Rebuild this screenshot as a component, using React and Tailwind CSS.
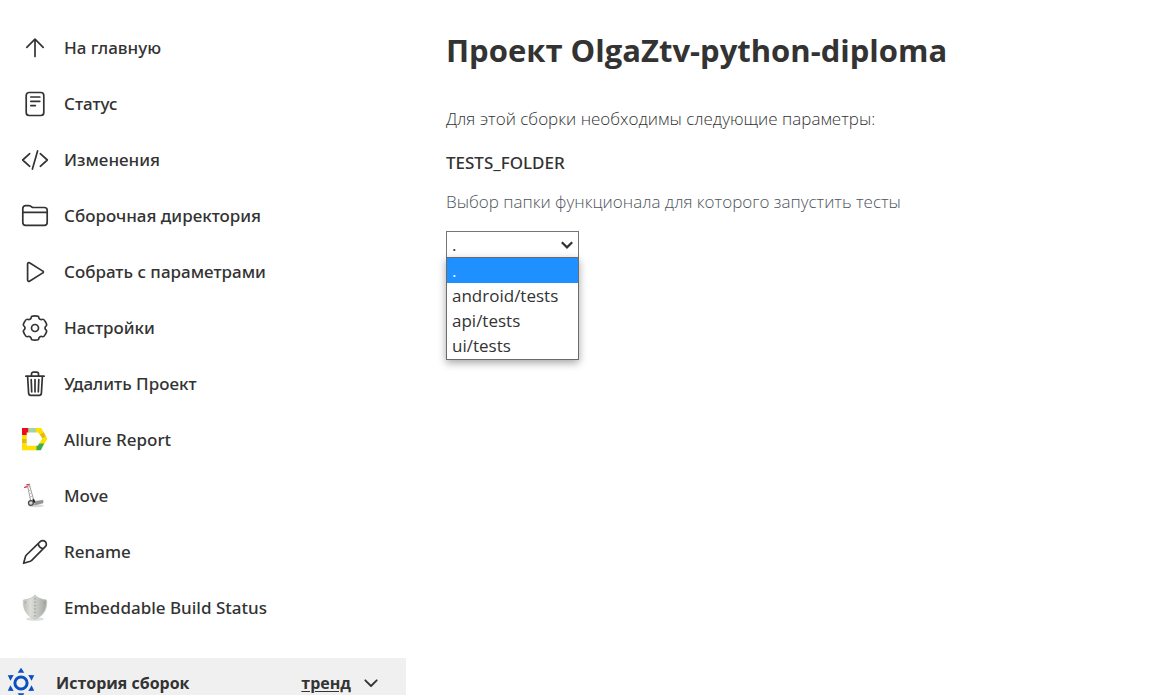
import React, { useState } from "react";

function Icon({ children }) {
  return (
    <svg
      viewBox="0 0 28 28"
      className="size-7 shrink-0"
      fill="none"
      stroke="currentColor"
      strokeWidth="1.7"
      strokeLinecap="round"
      strokeLinejoin="round"
      aria-hidden="true"
    >
      {children}
    </svg>
  );
}

const ArrowUp = () => (
  <Icon>
    <path d="M14 22.5V5.5M5.8 13.3 14 5.2l8.2 8.1" />
  </Icon>
);

const Reader = () => (
  <Icon>
    <rect x="5.2" y="2.5" width="17.6" height="23" rx="3" />
    <path d="M9.8 7h9M9.8 11.3h9M9.8 15.6h4.6" />
  </Icon>
);

const Code = () => (
  <Icon>
    <path d="M8.7 7.7 1.7 14l7 6.3M19.3 7.7l7 6.3-7 6.3M16.6 4.9l-5.2 18.2" />
  </Icon>
);

const Folder = () => (
  <Icon>
    <path d="M1.8 20.6V6.4a2.8 2.8 0 0 1 2.8-2.8h3.3c.6 0 1.1.2 1.6.5l1.3.9c.5.3 1 .5 1.6.5h11a2.8 2.8 0 0 1 2.8 2.8v12.3a2.8 2.8 0 0 1-2.8 2.8H4.6a2.8 2.8 0 0 1-2.8-2.8ZM1.8 10.3h24.4" />
  </Icon>
);

const Play = () => (
  <Icon>
    <path d="M6.600 5.900v16.200c0 1 1 1.600 1.900 1.100l13.300-8.300c.8-.4.8-1.400 0-1.800L8.500 4.800C7.600 4.300 6.600 4.900 6.600 5.900Z" />
  </Icon>
);

// Six rounded lobes: each corner is a curve control point, joined at edge midpoints.
function gearPath() {
  const points = [];
  for (let lobe = 0; lobe < 6; lobe++) {
    for (const [offset, radius] of [[-22, 10.1], [-17, 12.7], [17, 12.7], [22, 10.1]]) {
      const angle = ((lobe * 60 + offset) * Math.PI) / 180;
      points.push([14 + radius * Math.sin(angle), 14 - radius * Math.cos(angle)]);
    }
  }
  const mid = (a, b) => [(a[0] + b[0]) / 2, (a[1] + b[1]) / 2];
  const start = mid(points[points.length - 1], points[0]);
  return (
    `M${start}` +
    points.map((p, i) => `Q${p} ${mid(p, points[(i + 1) % points.length])}`).join("") +
    "Z"
  );
}

const Gear = () => (
  <Icon>
    <path d={gearPath()} />
    <circle cx="14" cy="14" r="3.5" />
  </Icon>
);

const Trash = () => (
  <Icon>
    <path d="M4.900 6.200h18.200M6.600 6.200l1 16.900c.1 1.300 1 2.200 2.200 2.200h8.400c1.300 0 2.100-.9 2.200-2.200l1-16.900M10.500 6V4a1.900 1.900 0 0 1 1.900-1.900h3.200A1.900 1.900 0 0 1 17.500 4v2M14 9.600v12.200M10.200 9.600l.5 12.200M17.800 9.600l-.5 12.200" />
  </Icon>
);

const Pencil = () => (
  <Icon>
    <path d="M2.600 25.300 4.500 18.500c.2-.6.5-1.100.9-1.500L19.200 3.600a3.600 3.600 0 0 1 5.100 0 3.600 3.600 0 0 1 0 5.100L10.700 22.400c-.4.400-.9.700-1.400.9ZM17.200 5.600c.4 2.700 2.100 4.500 4.900 5.200" />
  </Icon>
);

const Allure = () => (
  <Icon>
    <g stroke="none">
      <path fill="#a5d3a2" d="M7 2h8.500v4.500H7z" />
      <path fill="#ffe000" d="M15 2h5.200l3.200 5.200-3.800 2.600-2.600-3.300h-2z" />
      <path fill="#e2bd10" d="m22.800 6.200 2.400 4.200-3.800 2.400-2.500-4.200z" />
      <path fill="#ffe000" d="m25 10.200 1.400 2.600-3.600 6-4.400-1.700 2.700-4z" />
      <path fill="#3fac49" d="M18 17.500h5.200l-3.300 6.800H15v-4.600h2z" />
      <path fill="#ffe000" d="M1 19h4.700v.7H15.500v4.600H1z" />
      <path fill="#ffe000" d="M1 8.500h4.700V13H1z" />
      <path fill="#e0bb0c" d="M1 13h4.700v4.500H1z" />
      <path fill="#ffe000" d="M1 17.400h4.700v2.400H1z" />
      <path fill="#eb0a1e" d="M1 2h6.200v4.500H5.700v2.600H1z" />
    </g>
  </Icon>
);

const HandTruck = () => (
  <Icon>
    <ellipse cx="15" cy="23.800" rx="8" ry="1.500" fill="#d9d9d9" stroke="none" />
    <path d="M6.700 4.300 9.900 20M8.800 4.300l4.300 15" stroke="#9a9a9a" strokeWidth="1" />
    <path d="M7.700 8.500h1.700M8.300 11.500h2M9 14.500h2" stroke="#c5c5c5" strokeWidth="1" />
    <path d="M3.600 5.300 6.200 4.600M5.800 2.900l2.500-.5" stroke="#e02d35" strokeWidth="1.300" />
    <path d="M6.700 4.300 8.600 2.600l.2 2" stroke="#999" strokeWidth=".8" />
    <path d="m13.300 19.500 8.700-1.300v2.700l-8.300 2.100z" fill="#92958f" stroke="#8a8d88" strokeWidth=".6" />
    <path d="M11.600 16.800c1.700.2 2.600 1.600 2.600 3.700l-2.500.5z" fill="#222" stroke="none" />
    <circle cx="9.900" cy="21" r="2.400" fill="#d7d7d7" stroke="#4a4a4a" strokeWidth="1.300" />
  </Icon>
);

const Shield = () => (
  <Icon>
    <defs>
      <linearGradient id="shield-metal" x1="0" y1="0" x2="1" y2="0">
        <stop offset="0" stopColor="#b9bbb6" />
        <stop offset=".3" stopColor="#dcded9" />
        <stop offset=".55" stopColor="#c9cbc6" />
        <stop offset="1" stopColor="#a3a5a0" />
      </linearGradient>
    </defs>
    <ellipse cx="14" cy="25" rx="9" ry="1.700" fill="#dedede" stroke="none" />
    <path
      d="M14 1.300C11.500 3.700 8 5.500 2.400 6c-.7 8.500 2.500 15.800 11.600 19.200C23.100 21.800 26.300 14.500 25.600 6 20 5.500 16.500 3.700 14 1.300Z"
      fill="url(#shield-metal)"
      stroke="#c4c6c1"
      strokeWidth=".8"
    />
    <path d="M14 4.500v18" stroke="#92948f" strokeWidth="1.200" strokeDasharray=".4 3" />
    <path d="M4.500 8.600h.1M23.500 8.600h.1" stroke="#888" strokeWidth="1" />
  </Icon>
);

const HistoryMark = () => (
  <svg viewBox="-16 -16 32 32" className="size-8 shrink-0" fill="#0b50c0" aria-hidden="true">
    <circle r="6.100" fill="none" stroke="#0b50c0" strokeWidth="3" />
    {[0, 60, 120, 180, 240, 300].map((angle) => (
      <path key={angle} d="M0-15.300 3.300-10.300h-6.600z" transform={`rotate(${angle})`} />
    ))}
  </svg>
);

const tasks = [
  { label: "На главную", icon: <ArrowUp /> },
  { label: "Статус", icon: <Reader /> },
  { label: "Изменения", icon: <Code /> },
  { label: "Сборочная директория", icon: <Folder /> },
  { label: "Собрать с параметрами", icon: <Play /> },
  { label: "Настройки", icon: <Gear /> },
  { label: "Удалить Проект", icon: <Trash /> },
  { label: "Allure Report", icon: <Allure /> },
  { label: "Move", icon: <HandTruck /> },
  { label: "Rename", icon: <Pencil /> },
  { label: "Embeddable Build Status", icon: <Shield /> },
];

const folders = [".", "android/tests", "api/tests", "ui/tests"];

function Sidebar() {
  return (
    <aside className="w-[406px] shrink-0 pt-5">
      <nav aria-label="Задачи">
        <ul>
          {tasks.map((task) => (
            <li key={task.label}>
              <a href="#" className="flex h-14 items-center gap-[15px] pl-[21px] font-['Noto_Sans','Open_Sans',sans-serif] text-[17px] font-medium">
                {task.icon}
                <span>{task.label}</span>
              </a>
            </li>
          ))}
        </ul>
      </nav>
      <section className="mt-[22px] flex h-[50px] items-center bg-[#f0f0f0] pr-[27px] pl-[5px]">
        <HistoryMark />
        <h2 className="ml-[19px] flex-1 text-[16px] font-bold">История сборок</h2>
        <a href="#" className="text-[16px] font-bold underline underline-offset-2">
          тренд
        </a>
        <button type="button" aria-label="Свернуть" className="ml-3">
          <svg viewBox="0 0 16 16" className="size-4" fill="none" stroke="currentColor" strokeWidth="1.800" strokeLinecap="round" strokeLinejoin="round">
            <path d="m2.300 5.300 5.700 5.700 5.700-5.700" />
          </svg>
        </button>
      </section>
    </aside>
  );
}

function FolderSelect() {
  const [value, setValue] = useState(".");
  return (
    <div className="relative mt-4 w-[133px]">
      <select
        id="tests-folder"
        value={value}
        onChange={(e) => setValue(e.target.value)}
        className="block h-7 w-full appearance-none border border-[#767676] bg-white pl-[5px] text-[17px] leading-[26px]"
      >
        {folders.map((folder) => (
          <option key={folder}>{folder}</option>
        ))}
      </select>
      <svg viewBox="0 0 14 14" className="pointer-events-none absolute top-[7px] right-[5px] size-[14px]" fill="none" stroke="currentColor" strokeWidth="2.200" aria-hidden="true">
        <path d="m1.800 4.200 5.200 5.200 5.200-5.200" />
      </svg>
      <ul
        role="listbox"
        aria-label="TESTS_FOLDER"
        className="absolute top-[26px] left-0 w-full border border-[#6b6b6b] bg-white pb-px text-[17px] leading-[25px] shadow-[0_3px_8px_rgba(0,0,0,0.35)]"
      >
        {folders.map((folder) => (
          <li
            key={folder}
            role="option"
            aria-selected={folder === value}
            onClick={() => setValue(folder)}
            className="px-[5px] aria-selected:bg-[#1e90ff] aria-selected:text-white"
          >
            {folder}
          </li>
        ))}
      </ul>
    </div>
  );
}

export default function App() {
  return (
    <div className="flex h-screen overflow-hidden bg-white font-['Open_Sans','Noto_Sans',sans-serif] text-[#333333]">
      <Sidebar />
      <main className="min-w-0 flex-1 pt-[27px] pr-10 pl-10">
        <h1 className="text-[31px] leading-[46px] font-bold">Проект OlgaZtv-python-diploma</h1>
        <p className="mt-[33px] text-[17px] leading-[26px] font-light">Для этой сборки необходимы следующие параметры:</p>
        <form>
          <label htmlFor="tests-folder" className="mt-[18px] block font-['Noto_Sans','Open_Sans',sans-serif] text-[17px] leading-[26px] font-medium">
            TESTS_FOLDER
          </label>
          <p className="mt-[13px] text-[17px] leading-[26px] font-light text-[#4d545d]">
            Выбор папки функционала для которого запустить тесты
          </p>
          <FolderSelect />
        </form>
      </main>
    </div>
  );
}
